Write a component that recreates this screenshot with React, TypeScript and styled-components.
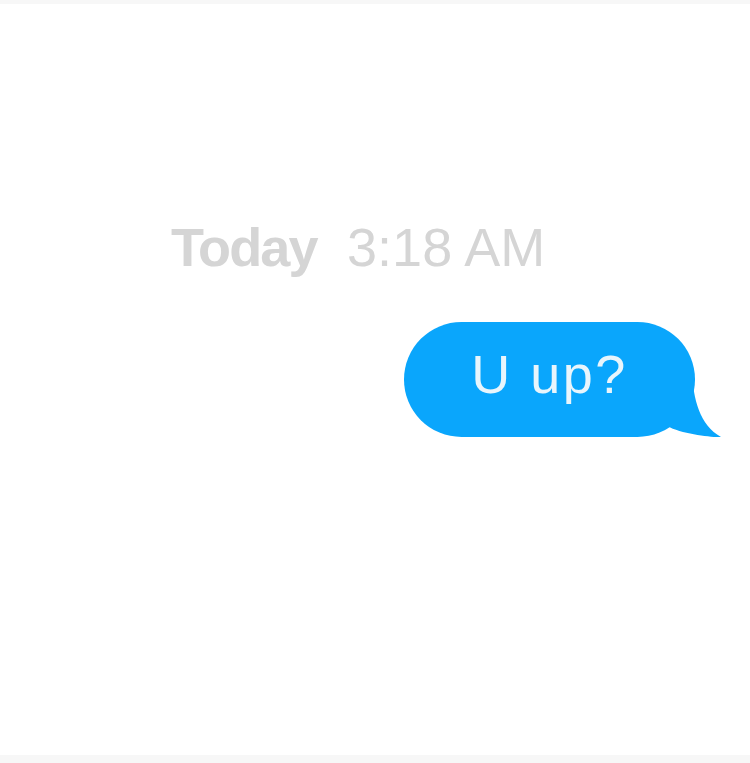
import React from "react";
import styled, { createGlobalStyle } from "styled-components";

const Global = createGlobalStyle`
  html, body { margin: 0; padding: 0; background: #ffffff; }
  body { font-family: "Liberation Sans", Arial, sans-serif; }
`;

const Page = styled.div`
  width: 750px;
  height: 763px;
  display: flex;
  flex-direction: column;
  background: #ffffff;
  overflow: hidden;
`;

const Strip = styled.div<{ $h: number }>`
  height: ${(p) => p.$h}px;
  flex: 0 0 auto;
  background: #f7f7f7;
`;

const Thread = styled.div`
  flex: 1;
  display: flex;
  flex-direction: column;
`;

const Stamp = styled.div`
  margin-top: 216px;
  padding-left: 171px;
  font-size: 55px;
  line-height: 1;
  color: #d5d5d5;
  white-space: pre;
`;

const Day = styled.span`
  font-weight: 700;
  font-size: 54px;
  letter-spacing: -1.9px;
`;

const Time = styled.span`
  font-weight: 400;
  font-size: 54px;
`;

const Row = styled.div`
  display: flex;
  justify-content: flex-end;
  padding-right: 55px;
  margin-top: 47px;
`;

const Bubble = styled.div`
  position: relative;
  width: 291px;
  height: 115px;
  box-sizing: border-box;
  padding-top: 25px;
  border-radius: 57.5px;
  background: #0aa6fc;
  display: flex;
  justify-content: center;
`;

const BubbleText = styled.span`
  position: relative;
  z-index: 1;
  font-size: 54px;
  line-height: 1;
  letter-spacing: 2.5px;
  color: #e8f5fc;
`;

const Tail = styled.svg`
  position: absolute;
  left: 236px;
  top: 48px;
`;

export default function App() {
  return (
    <>
      <Global />
      <Page>
        <Strip $h={4} />
        <Thread>
          <Stamp>
            <Day>Today</Day>
            {"  "}
            <Time>3:18 AM</Time>
          </Stamp>
          <Row>
            <Bubble>
              <BubbleText>U up?</BubbleText>
              <Tail width="84" height="70" viewBox="0 0 84 70">
                <path
                  d="M52 0 C53 30 60 55 81 67 C71 67.5 42 64 27 56 C22 61 15 64 0 66 L0 0 Z"
                  fill="#0aa6fc"
                />
              </Tail>
            </Bubble>
          </Row>
        </Thread>
        <Strip $h={8} />
      </Page>
    </>
  );
}
